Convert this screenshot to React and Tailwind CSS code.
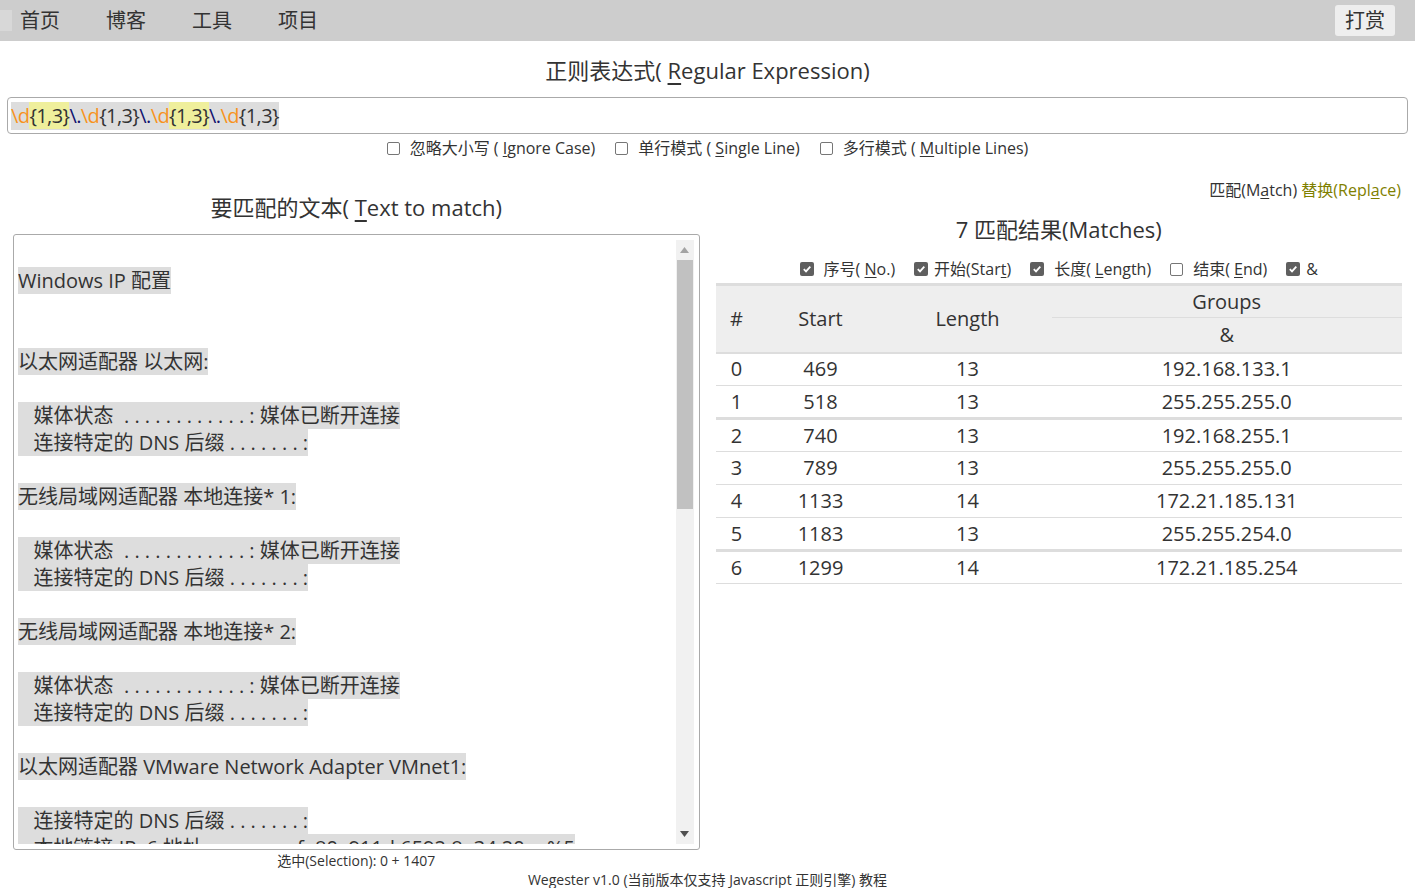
import React from "react";

const Box = ({ checked }) =>
	checked ? (
		<span className="inline-flex w-[14px] h-[14px] shrink-0 rounded-[2px] bg-[#5f5f5f] items-center justify-center">
			<svg width="10" height="10" viewBox="0 0 10 10">
				<path d="M1.8 5.2 L4 7.4 L8.3 2.6" fill="none" stroke="#fff" strokeWidth="1.8" />
			</svg>
		</span>
	) : (
		<span className="inline-block w-[13px] h-[13px] shrink-0 rounded-[2px] border border-[#767676] bg-white" />
	);

const Opt = ({ checked, gap = "ml-[10px]", children }) => (
	<label className="flex items-center">
		<Box checked={checked} />
		<span className={gap}>{children}</span>
	</label>
);

const dots = (n) => Array(n).fill(".").join(" ");

const lines = [
	"",
	"Windows IP 配置",
	"",
	"",
	"以太网适配器 以太网:",
	"",
	`   媒体状态  ${dots(12)} : 媒体已断开连接`,
	`   连接特定的 DNS 后缀 ${dots(7)} :`,
	"",
	"无线局域网适配器 本地连接* 1:",
	"",
	`   媒体状态  ${dots(12)} : 媒体已断开连接`,
	`   连接特定的 DNS 后缀 ${dots(7)} :`,
	"",
	"无线局域网适配器 本地连接* 2:",
	"",
	`   媒体状态  ${dots(12)} : 媒体已断开连接`,
	`   连接特定的 DNS 后缀 ${dots(7)} :`,
	"",
	"以太网适配器 VMware Network Adapter VMnet1:",
	"",
	`   连接特定的 DNS 后缀 ${dots(7)} :`,
	`   本地链接 IPv6 地址${dots(8)} : fe80::911d:6592:8a34:20ea%5`,
];

const matches = [
	[0, 469, 13, "192.168.133.1"],
	[1, 518, 13, "255.255.255.0"],
	[2, 740, 13, "192.168.255.1"],
	[3, 789, 13, "255.255.255.0"],
	[4, 1133, 14, "172.21.185.131"],
	[5, 1183, 13, "255.255.254.0"],
	[6, 1299, 14, "172.21.185.254"],
];

const D = () => <span className="text-[#f7931e]">\d</span>;
const Q = ({ hl }) => (
	<span className={hl ? "bg-[#efef9c]" : ""}>{"{1,3}"}</span>
);
const Dot = () => <span className="text-[#10106e]">\.</span>;

export default function App() {
	return (
		<div className="min-h-screen bg-white text-[#333] font-['Open_Sans','Noto_Sans_CJK_SC',sans-serif]">
			{/* nav */}
			<nav className="h-[41px] bg-[#cdcdcd] flex items-center text-[20px]">
				<div className="w-[12px] h-[21px] bg-[#d8d8d8]" />
				<ul className="flex gap-[46px] ml-[8px]">
					<li>首页</li>
					<li>博客</li>
					<li>工具</li>
					<li>项目</li>
				</ul>
				<button className="ml-auto mr-[20px] w-[60px] h-[31px] bg-[#eee] rounded-[3px] leading-[31px]">
					打赏
				</button>
			</nav>

			<h1 className="mt-[14px] text-center text-[22px] leading-[30px]">
				正则表达式( <u className="underline-offset-4">R</u>egular Expression)
			</h1>

			<div className="mx-[7px] mt-[12px] h-[37px] border border-[#aaa] rounded-[4px] px-[3px] flex items-center text-[20px] leading-[28px] tracking-[-0.6px]">
				<span className="bg-[#ddd]">
					<D />
					<Q hl />
					<Dot />
					<D />
					<Q />
					<Dot />
					<D />
					<Q hl />
					<Dot />
					<D />
					<Q />
				</span>
			</div>

			<div className="mt-[2px] flex justify-center gap-[20px] text-[16px] leading-[24px]">
				<Opt>
					忽略大小写 ( <u className="underline-offset-2">I</u>gnore Case)
				</Opt>
				<Opt>
					单行模式 ( <u className="underline-offset-2">S</u>ingle Line)
				</Opt>
				<Opt>
					多行模式 ( <u className="underline-offset-2">M</u>ultiple Lines)
				</Opt>
			</div>

			<div className="px-[13px] flex gap-[16px]">
				{/* left */}
				<div className="flex-1 min-w-0 flex flex-col">
					<h2 className="mt-[32px] text-center text-[22px] leading-[30px]">
						要匹配的文本( <u className="underline-offset-4">T</u>ext to match)
					</h2>
					<div className="mt-[12px] h-[616px] border border-[#aaa] rounded-[3px] pl-[4px] pr-[5px] py-[5px] flex">
						<div className="flex-1 overflow-hidden text-[20px] leading-[27px] whitespace-pre">
							{lines.map((l, i) => (
								<div key={i} className="h-[27px]">
									{l && <span className="inline-block bg-[#ddd] h-[27px]">{l}</span>}
								</div>
							))}
						</div>
						<div className="w-[18px] bg-[#f1f1f1] flex flex-col items-center">
							<div className="h-[20px] flex items-center justify-center">
								<svg width="9" height="6" viewBox="0 0 9 6">
									<path d="M0 6 L4.5 0 L9 6 Z" fill="#a3a3a3" />
								</svg>
							</div>
							<div className="w-[16px] h-[249px] bg-[#c1c1c1]" />
							<div className="flex-1" />
							<div className="h-[20px] flex items-center justify-center">
								<svg width="9" height="6" viewBox="0 0 9 6">
									<path d="M0 0 L9 0 L4.5 6 Z" fill="#505050" />
								</svg>
							</div>
						</div>
					</div>
					<p className="mt-px text-center text-[14px] leading-[20px]">
						选中(Selection): 0 + 1407
					</p>
				</div>

				{/* right */}
				<div className="flex-1 min-w-0 flex flex-col">
					<div className="mt-[19px] text-right text-[16px] leading-[22px] pr-px">
						匹配(M<u className="underline-offset-2">a</u>tch){" "}
						<span className="text-[#808000]">
							替换(Repl<u className="underline-offset-2">a</u>ce)
						</span>
					</div>
					<h2 className="mt-[13px] text-center text-[22px] leading-[30px]">
						7 匹配结果(Matches)
					</h2>
					<div className="mt-[14px] flex justify-center gap-[19px] text-[16px] leading-[22px]">
						<Opt checked>
							序号( <u className="underline-offset-2">N</u>o.)
						</Opt>
						<Opt checked gap="ml-[6px]">
							开始(Star<u className="underline-offset-2">t</u>)
						</Opt>
						<Opt checked>
							长度( <u className="underline-offset-2">L</u>ength)
						</Opt>
						<Opt>
							结束( <u className="underline-offset-2">E</u>nd)
						</Opt>
						<Opt checked gap="ml-[6px]">
							&amp;
						</Opt>
					</div>
					<table className="mt-[3px] w-full border-collapse text-[20px] text-center">
						<thead className="bg-[#eee]">
							<tr className="border-t-[3px] border-[#ddd]">
								<th rowSpan={2} className="w-[42px] font-normal border-b-2 border-[#ddd]">
									#
								</th>
								<th rowSpan={2} className="w-[126px] font-normal border-b-2 border-[#ddd]">
									Start
								</th>
								<th rowSpan={2} className="w-[168px] font-normal border-b-2 border-[#ddd]">
									Length
								</th>
								<th className="h-[33px] font-normal border-b border-[#ddd]">Groups</th>
							</tr>
							<tr>
								<th className="h-[35px] font-normal border-b-2 border-[#ddd]">&amp;</th>
							</tr>
						</thead>
						<tbody>
							{matches.map((m) => (
								<tr
									key={m[0]}
									className={
										m[0] === 1 || m[0] === 5
											? "h-[33px] border-b-[3px] border-[#ddd]"
											: "h-[33px] border-b border-[#ddd]"
									}
								>
									<td>{m[0]}</td>
									<td>{m[1]}</td>
									<td>{m[2]}</td>
									<td>{m[3]}</td>
								</tr>
							))}
						</tbody>
					</table>
				</div>
			</div>

			<footer className="text-center text-[14px] leading-[20px] -mt-px">
				Wegester v1.0 (当前版本仅支持 Javascript 正则引擎) 教程
			</footer>
		</div>
	);
}
